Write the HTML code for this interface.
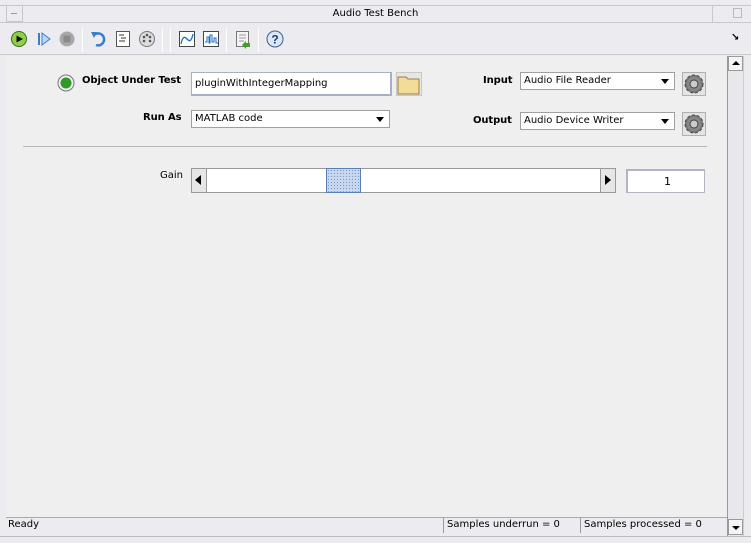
<!DOCTYPE html>
<html><head><style>
*{margin:0;padding:0;box-sizing:border-box}
body{width:751px;height:543px;background:#ecebf0;font-family:"DejaVu Sans","Liberation Sans",sans-serif;font-size:10px;color:#000;position:relative;overflow:hidden}
.a{position:absolute}
.b{font-weight:bold;font-size:10px;letter-spacing:-0.1px}
.field{background:#fff;border:1px solid #9aa0b0;font-size:10px;padding-left:3px}
.dd{background:#fff;border:1px solid #a0a0a0;font-size:10px;padding-left:3px;line-height:15px}
.dd:after{content:"";position:absolute;right:5px;top:6px;border-left:4px solid transparent;border-right:4px solid transparent;border-top:5px solid #000}
.sep{position:absolute;top:28px;width:1px;height:24px;background:#a0a0a0;border-right:1px solid #fff}
.gear{position:absolute;width:24px;height:24px;background:#e4e4e4;border:1px solid #b0b0b0}
</style></head><body>
<div class="a" style="left:0;top:5px;width:751px;height:1px;background:#c8c8cc"></div>
<div class="a" style="left:6px;top:5px;width:17px;height:17px;border:1px solid #c8c8cc"></div>
<div class="a" style="left:11px;top:13px;width:6px;height:1px;background:#999"></div>
<div class="a" style="left:0;top:8px;width:751px;text-align:center;font-size:10px">Audio Test Bench</div>
<div class="a" style="left:712px;top:5px;width:1px;height:17px;background:#c8c8cc"></div>
<div class="a" style="left:733px;top:8px;width:9px;height:10px;border:1px solid #bbb"></div>
<div class="a" style="left:0;top:22px;width:751px;height:1px;background:#c8c8cc"></div>
<svg class="a" style="left:0;top:26px" width="300" height="28">
<circle cx="19" cy="13" r="7.5" fill="#8fd04a" stroke="#3b6e14"/><path d="M16.5 9.5 L23 13 L16.5 16.5Z" fill="#111"/>
<rect x="38" y="7" width="2" height="12" fill="#3b7ec8"/><path d="M42 7 L50 13 L42 19Z" fill="#bcd6f0" stroke="#3b7ec8"/>
<circle cx="67" cy="13" r="7.5" fill="#a8a8a8"/><rect x="63.5" y="9.5" width="7" height="7" fill="#8a8a8a"/>
<path d="M94 9 A6 6 0 1 1 96 19" fill="none" stroke="#3b7ec8" stroke-width="2.5"/><path d="M91 6 L97 6 L94 12Z" fill="#3b7ec8"/>
<rect x="116.5" y="5.5" width="13" height="15" fill="#fff" stroke="#555"/><path d="M119 9h5M121 12h5M119 15h6" stroke="#333"/>
<circle cx="147" cy="13" r="7.5" fill="#ddd" stroke="#777"/><circle cx="144" cy="11" r="1.3" fill="#555"/><circle cx="147" cy="9" r="1.3" fill="#555"/><circle cx="150" cy="11" r="1.3" fill="#555"/><circle cx="144" cy="15" r="1.3" fill="#555"/><circle cx="150" cy="15" r="1.3" fill="#555"/>
<rect x="179.5" y="5.5" width="15" height="15" fill="#fff" stroke="#444"/><path d="M181 18 C185 0 189 26 193 8" fill="none" stroke="#1a6fc0" stroke-width="1.3"/>
<rect x="203.5" y="5.5" width="15" height="15" fill="#fff" stroke="#444"/><path d="M205 16h2v-5h2v6h1v-8h2v7h2v-4h2v5h2" fill="none" stroke="#1a6fc0"/>
<rect x="236.5" y="5.5" width="12" height="15" fill="#f4f4f4" stroke="#777"/><path d="M239 9h7M239 12h7M239 15h5" stroke="#999"/><path d="M242 19 l4 -4 l0 2 l4 0 l0 4 l-4 0 l0 2z" fill="#4a9b2a"/>
<circle cx="275" cy="13" r="8" fill="#dce8f6" stroke="#3a5f90"/><text x="275" y="17.5" font-size="12" font-weight="bold" text-anchor="middle" fill="#1a3d6e" font-family="Liberation Sans">?</text>
</svg>
<div class="sep" style="left:82px"></div><div class="sep" style="left:162px"></div><div class="sep" style="left:170px"></div><div class="sep" style="left:226px"></div><div class="sep" style="left:258px"></div>
<div class="a" style="left:731px;top:32px;font-size:10px;font-weight:bold">↘</div>
<div class="a" style="left:0;top:54px;width:751px;height:1px;background:#c8c8cc"></div>
<div class="a" style="left:6px;top:56px;width:722px;height:461px;background:#efefef"></div>
<svg class="a" style="left:56px;top:73px" width="20" height="20"><circle cx="10" cy="10" r="8" fill="#f0f0f0" stroke="#777"/><circle cx="10" cy="10" r="5.5" fill="#2f9a2a"/></svg>
<div class="a b" style="left:82px;top:75px">Object Under Test</div>
<div class="a field" style="left:191px;top:72px;width:201px;height:24px;line-height:22px;border-color:#a8b0c8;border-width:1px 2px 2px 1px">pluginWithIntegerMapping</div>
<svg class="a" style="left:396px;top:72px" width="26" height="24"><rect x="0.5" y="0.5" width="25" height="23" fill="#e6e6e6" stroke="#c8c8c8"/><path d="M2 5h8l2 2h11v15H2Z" fill="#f3dc95" stroke="#9a8040"/></svg>
<div class="a b" style="left:143px;top:112px">Run As</div>
<div class="a dd" style="left:191px;top:110px;width:199px;height:18px">MATLAB code</div>
<div class="a b" style="left:483px;top:75px">Input</div>
<div class="a dd" style="left:520px;top:72px;width:155px;height:18px">Audio File Reader</div>
<div class="a b" style="left:473px;top:115px">Output</div>
<div class="a dd" style="left:520px;top:112px;width:155px;height:18px">Audio Device Writer</div>
<div class="gear" style="left:682px;top:72px"><svg width="22" height="22"><circle cx="11" cy="11" r="9" fill="#777" stroke="#444" stroke-dasharray="3 2"/><circle cx="11" cy="11" r="7" fill="#888"/><circle cx="11" cy="11" r="4" fill="#ccc" stroke="#444"/></svg></div>
<div class="gear" style="left:682px;top:112px"><svg width="22" height="22"><circle cx="11" cy="11" r="9" fill="#777" stroke="#444" stroke-dasharray="3 2"/><circle cx="11" cy="11" r="7" fill="#888"/><circle cx="11" cy="11" r="4" fill="#ccc" stroke="#444"/></svg></div>
<div class="a" style="left:23px;top:146px;width:684px;height:1px;background:#b8b8b8"></div>
<div class="a" style="left:160px;top:170px">Gain</div>
<div class="a" style="left:191px;top:168px;width:425px;height:25px;background:#fff;border:1px solid #999"></div>
<div class="a" style="left:191px;top:168px;width:16px;height:25px;background:#e6e6e6;border:1px solid #999"></div>
<div class="a" style="left:195px;top:175px;border-top:5px solid transparent;border-bottom:5px solid transparent;border-right:6px solid #000"></div>
<div class="a" style="left:600px;top:168px;width:16px;height:25px;background:#e6e6e6;border:1px solid #999"></div>
<div class="a" style="left:605px;top:175px;border-top:5px solid transparent;border-bottom:5px solid transparent;border-left:6px solid #000"></div>
<div class="a" style="left:326px;top:168px;width:35px;height:25px;background:#c9d8ee;border:1px solid #5a7fb8;background-image:radial-gradient(#7a9cc8 0.7px,transparent 0.8px);background-size:3px 3px"></div>
<div class="a field" style="left:626px;top:169px;width:79px;height:24px;text-align:center;line-height:22px;font-size:11px;border:2px solid #b0b4c4;border-width:2px 1px 1px 2px">1</div>
<div class="a" style="left:727px;top:56px;width:17px;height:480px;background:#e8e8ec;border-left:1px solid #999;border-right:1px solid #ccc"></div>
<div class="a" style="left:728px;top:56px;width:15px;height:15px;background:#f4f4f4;border:1px solid #999"></div>
<div class="a" style="left:732px;top:61px;border-left:4px solid transparent;border-right:4px solid transparent;border-bottom:4px solid #000"></div>
<div class="a" style="left:728px;top:519px;width:15px;height:16px;background:#f4f4f4;border:1px solid #999"></div>
<div class="a" style="left:732px;top:526px;border-left:4px solid transparent;border-right:4px solid transparent;border-top:4px solid #000"></div>
<div class="a" style="left:6px;top:517px;width:721px;height:1px;background:#aaa"></div>
<div class="a" style="left:8px;top:519px">Ready</div>
<div class="a" style="left:443px;top:518px;width:1px;height:15px;background:#999"></div>
<div class="a" style="left:447px;top:519px">Samples underrun = 0</div>
<div class="a" style="left:580px;top:518px;width:1px;height:15px;background:#999"></div>
<div class="a" style="left:584px;top:519px">Samples processed = 0</div>
<div class="a" style="left:0;top:536px;width:751px;height:1px;background:#bbb"></div>
</body></html>
